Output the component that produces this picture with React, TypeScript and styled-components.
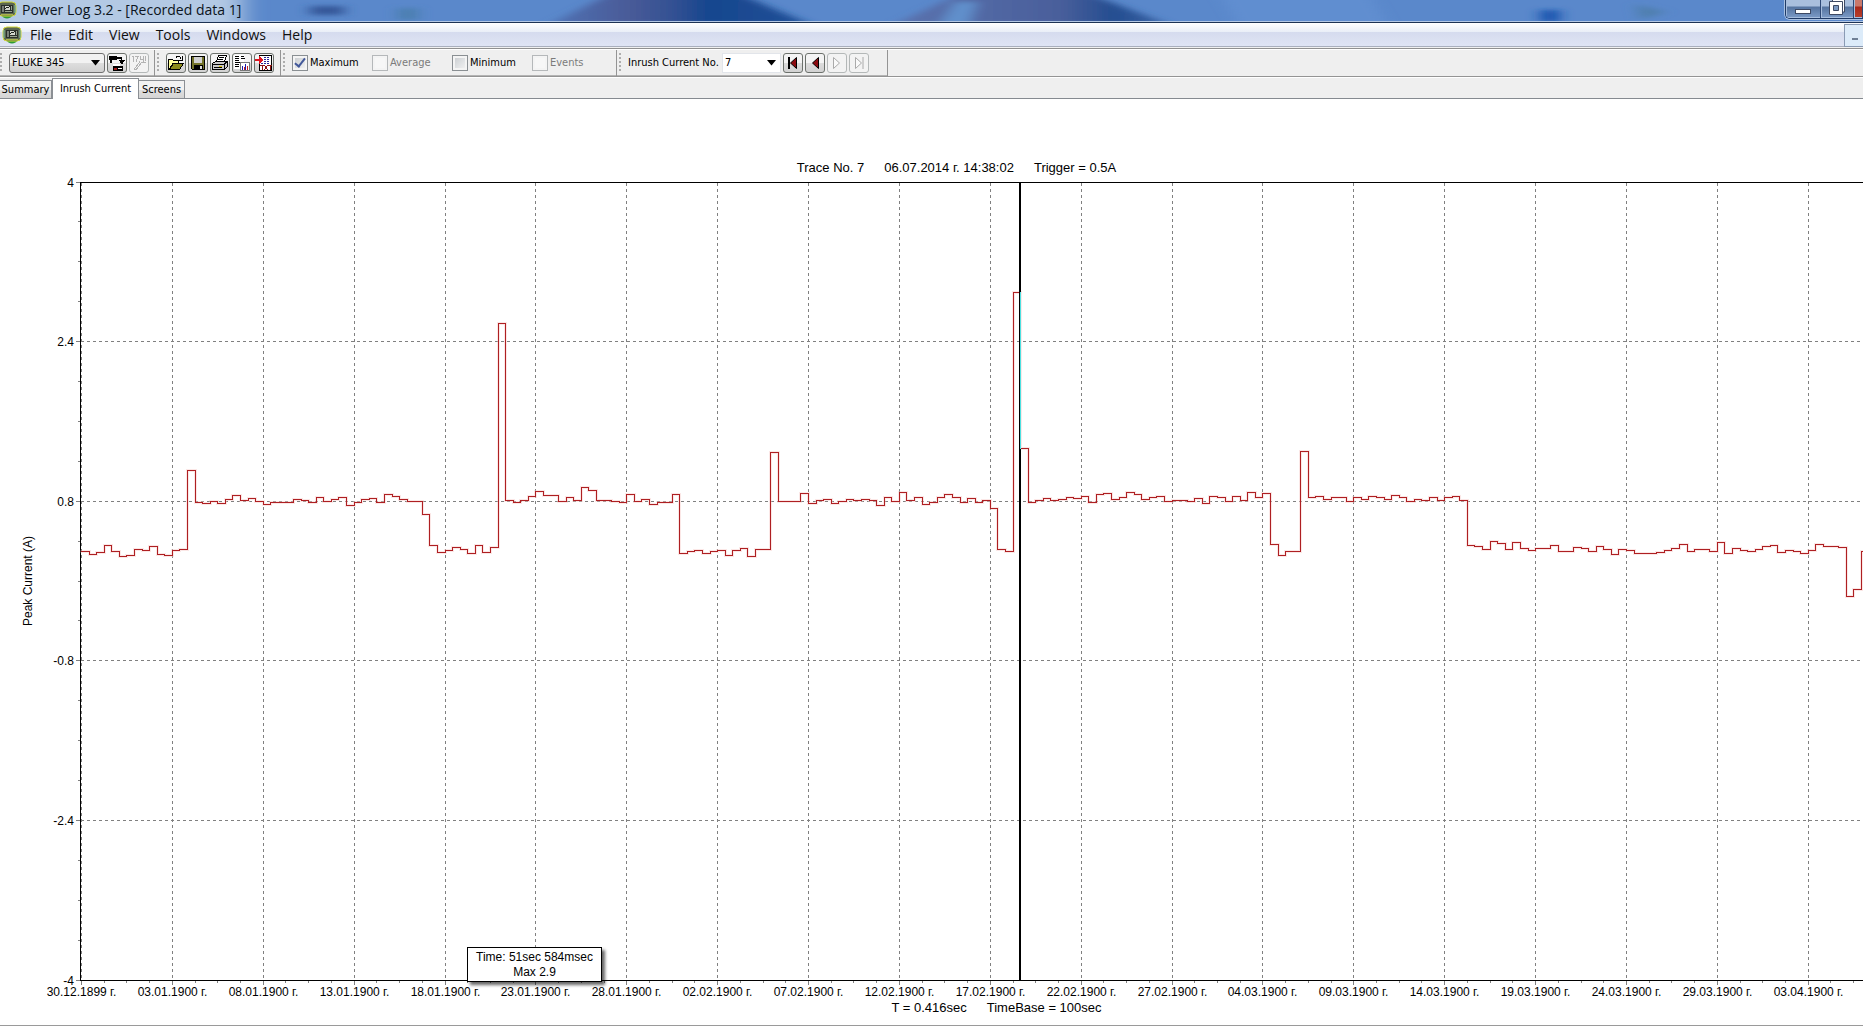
import React from "react";
import styled, { createGlobalStyle } from "styled-components";

const UI = `"Open Sans", "Noto Sans", sans-serif`;
const TOOL = `"DejaVu Sans Condensed", "Noto Sans", sans-serif`;
const ARIAL = `"Liberation Sans", Arial, sans-serif`;

const GlobalStyle = createGlobalStyle`
  *, *::before, *::after { box-sizing: border-box; }
  body { margin: 0; background: #fff; overflow: hidden; }
  button, select, input { font: inherit; color: inherit; margin: 0; }
`;

const Window = styled.div`
  display: flex;
  flex-direction: column;
  min-height: 100vh;
  overflow: hidden;
  color: #000;
`;

/* ---------- title bar ---------- */

const TitleBar = styled.header`
  position: relative;
  display: flex;
  justify-content: space-between;
  height: 23px;
  background: #5a88cb;
  border-bottom: 1px solid #1d3354;
  box-shadow: inset 0 -1px 0 #b4c8e4;
  overflow: hidden;
`;

const Backdrop = styled.svg`
  position: absolute;
  left: 0;
  top: 0;
  width: 100%;
  height: 21px;
`;

const TitleText = styled.h1`
  position: relative;
  display: flex;
  align-items: center;
  gap: 5px;
  margin: 0 0 0 -3px;
  height: 20px;
  font: 400 14px/20px ${UI};
  color: #0b1420;
  white-space: nowrap;
`;

const CaptionButtons = styled.div`
  position: relative;
  display: flex;
  height: 19px;
  border: 1px solid #1f3a66;
  border-top: 0;
  border-right: 0;
  border-radius: 0 0 0 5px;
  box-shadow: 0 0 0 1px #a9c1e2;
  overflow: hidden;
`;

const CaptionButton = styled.button<{ $w: number; $close?: boolean }>`
  display: flex;
  align-items: flex-start;
  justify-content: center;
  width: ${(p) => p.$w}px;
  padding: 0;
  border: 0;
  border-right: 1px solid #2d4875;
  box-shadow: inset 1px -1px 0 #a6bddd;
  background: ${(p) =>
    p.$close
      ? "linear-gradient(#c9796c 0 6px, #a8281a 7px, #b8402c)"
      : "linear-gradient(#a9bfdd 0 6px, #54739f 7px, #7c9bc7)"};
`;

/* ---------- menu ---------- */

const MenuBar = styled.nav`
  display: flex;
  justify-content: space-between;
  height: 26px;
  background: linear-gradient(#fff, #e9eef7 9px, #d5dbee 9px, #dfe4f4 23px, #a9afbd 23px, #a9afbd 24px, #f0f0f0 24px, #f0f0f0 25px, #909090 25px);
`;

const MenuList = styled.div`
  display: flex;
  align-items: center;
  height: 24px;
  padding-left: 2px;
`;

const MenuItem = styled.button`
  padding: 0 8px;
  border: 0;
  background: none;
  font: 400 14px/24px ${UI};
  color: #101010;
`;

const ChildMinimise = styled.button`
  display: flex;
  align-items: flex-end;
  width: 19px;
  height: 23px;
  margin-top: 1px;
  padding: 0 0 6px 7px;
  border: 1px solid #8a9bb4;
  border-right: 0;
  background: #dcebf9;

  &::before {
    content: "";
    width: 6px;
    height: 2px;
    background: #6f8096;
  }
`;

/* ---------- tool bar ---------- */

const ToolBar = styled.div`
  display: flex;
  height: 28px;
  background: #efefef;
  border-top: 1px solid #fff;
  border-bottom: 1px solid #949494;
  font: 400 11px/14px ${TOOL};
`;

const Band = styled.div<{ $start: number; $end: number }>`
  display: flex;
  align-items: center;
  padding: 0 ${(p) => p.$end}px 0 ${(p) => p.$start}px;
  border-right: 1px solid #949494;
  box-shadow: inset 0 -1px 0 #b4b4b4;
`;

const Grip = styled.span`
  width: 2px;
  height: 20px;
  margin-right: 7px;
  background: repeating-linear-gradient(#adadad 0 2px, transparent 2px 4px);
`;

const ButtonRow = styled.div`
  display: flex;
  gap: 2px;
`;

const ToolButton = styled.button`
  display: flex;
  align-items: center;
  justify-content: center;
  width: 20px;
  height: 20px;
  padding: 0;
  border: 1px solid #6c716c;
  border-radius: 3px;
  background: linear-gradient(#f4f4f4 50%, #dcdcdc 50%, #d2d2d2);

  &:disabled {
    border-color: #b4b8b8;
    background: #f3f3f3;
  }
`;

const Picker = styled.span<{ $w: number; $plain?: boolean }>`
  position: relative;
  display: flex;
  width: ${(p) => p.$w}px;
  margin-right: 2px;

  select {
    appearance: none;
    width: 100%;
    height: 20px;
    padding: 0 18px 0 2px;
    border: 1px solid ${(p) => (p.$plain ? "#e2e5ea" : "#707070")};
    border-radius: ${(p) => (p.$plain ? 0 : 3)}px;
    background: ${(p) => (p.$plain ? "#fff" : "linear-gradient(#f2f2f2 50%, #dedede 50%, #d0d0d0)")};
    color: #000;
  }

  svg {
    position: absolute;
    right: 5px;
    top: 7px;
    pointer-events: none;
  }
`;

const CheckGrid = styled.div`
  display: grid;
  grid-template-columns: repeat(4, 80px);
`;

const CheckLabel = styled.label<{ $off?: boolean }>`
  display: flex;
  align-items: center;
  gap: 2px;
  color: ${(p) => (p.$off ? "#7b7b7b" : "#000")};
`;

const CheckBox = styled.input`
  appearance: none;
  position: relative;
  width: 16px;
  height: 16px;
  border: 1px solid #8a8f93;
  background: linear-gradient(135deg, #c6cace, #f6f6f6);
  box-shadow: inset 0 0 0 2px #f4f4f4;

  &:disabled {
    border-color: #b5b8ba;
    background: #f7f7f7;
  }

  &:checked::after {
    content: "";
    position: absolute;
    left: 4px;
    top: 0;
    width: 6px;
    height: 11px;
    border: solid #42589a;
    border-width: 0 2px 2px 0;
    transform: rotate(38deg);
  }
`;

const FieldLabel = styled.label`
  width: 94px;
  white-space: nowrap;
`;

/* ---------- tabs ---------- */

const TabStrip = styled.div`
  display: flex;
  align-items: flex-end;
  height: 22px;
  background: #efefef;
  border-top: 1px solid #fff;
  border-bottom: 1px solid #858a90;
  font: 400 11px/14px ${TOOL};
`;

const Tab = styled.button<{ $active?: boolean; $w: number }>`
  width: ${(p) => p.$w}px;
  height: ${(p) => (p.$active ? 21 : 18)}px;
  margin-bottom: ${(p) => (p.$active ? -1 : 0)}px;
  padding: 0;
  border: 1px solid #8b8f94;
  border-bottom: 0;
  border-left-width: ${(p) => (p.$active ? 1 : 0)}px;
  background: ${(p) => (p.$active ? "#fff" : "linear-gradient(#f2f2f2 50%, #e0e0e0 50%, #d4d4d4)")};
  white-space: nowrap;
`;

/* ---------- chart ---------- */

const ChartPanel = styled.main`
  position: relative;
  flex: 1;
  display: flex;
  flex-direction: column;
  padding-top: 61px;
  border-bottom: 1px solid #9a9a9a;
  background: #fff;
  font: 400 13px/16px ${ARIAL};
`;

const Caption = styled.div<{ $inset: number }>`
  display: flex;
  justify-content: center;
  gap: 20px;
  padding-left: ${(p) => p.$inset}px;
  white-space: nowrap;
`;

const Plot = styled.svg`
  display: block;
  width: 100%;
  height: 824px;
  font: 400 12px ${ARIAL};
`;

const Readout = styled.div`
  position: absolute;
  left: 467px;
  top: 848px;
  width: 135px;
  padding: 2px 0 1px;
  border: 1px solid #000;
  background: #fff;
  box-shadow: 3px 3px 3px rgba(0, 0, 0, 0.6);
  font: 400 12px/15px ${ARIAL};
  text-align: center;
`;

const TOP = 6;
const BOTTOM = 804;
const ZERO_EIGHT = 325;
const LEFT = 81.5;
const STEP = 90.88 / 12;

// Offset of each sample from the 0.8 A grid line, downwards; twelve samples per date division.
const SAMPLES = [
  50, 53, 51, 44, 50, 55, 54, 48, 49, 45, 53, 54,
  49, 48, -31, 1, 2, 0, 2, -2, -6, -1, -3, 0,
  3, 1, 1, 1, -2, -1, 1, -4, 0, -2, -4, 4,
  1, -2, -3, 1, -7, -5, -2, 0, 0, 13, 44, 51,
  49, 46, 48, 52, 44, 51, 46, -178, -1, 1, -1, -5,
  -10, -6, -6, 0, -4, -1, -14, -11, -1, -1, 0, 1,
  -7, 0, -2, 3, 1, 1, -7, 52, 50, 49, 52, 50,
  49, 54, 49, 47, 55, 48, 48, -49, 0, 0, 0, -8,
  2, -1, -2, 2, 0, -2, -1, -2, -1, 4, -4, 0,
  -9, -1, -4, 3, 1, -4, -7, -4, 1, -3, 1, -1,
  7, 48, 50, -209, -53, 1, -1, -3, -1, -2, -4, -3,
  -5, 1, -7, -8, -2, -4, -9, -7, -2, -4, -5, 0,
  -1, -1, 0, -3, 2, -5, -4, 0, -5, -1, -9, -4,
  -8, 43, 54, 50, 50, -50, -4, -5, -2, -4, -4, 0,
  -4, -2, -5, -4, -2, -6, -4, 0, -2, -1, -4, -1,
  -4, -5, -1, 44, 45, 48, 40, 42, 48, 41, 47, 49,
  47, 47, 44, 50, 50, 46, 47, 50, 45, 48, 53, 48,
  49, 52, 52, 52, 51, 49, 47, 43, 50, 48, 48, 50,
  41, 52, 47, 49, 50, 48, 45, 44, 51, 49, 50, 52,
  49, 43, 45, 45, 46, 95, 88, 50,
];

const DATES = [
  "30.12.1899", "03.01.1900", "08.01.1900", "13.01.1900", "18.01.1900",
  "23.01.1900", "28.01.1900", "02.02.1900", "07.02.1900", "12.02.1900",
  "17.02.1900", "22.02.1900", "27.02.1900", "04.03.1900", "09.03.1900",
  "14.03.1900", "19.03.1900", "24.03.1900", "29.03.1900", "03.04.1900",
];

const LEVELS = ["4", "2.4", "0.8", "-0.8", "-2.4", "-4"];

const sampleX = (i: number) => Math.floor(LEFT + i * STEP) + 0.5;
const levelY = (k: number) => Math.floor(TOP + (k * (BOTTOM - TOP)) / 5) + 0.5;

const tracePath = SAMPLES.map((d, i) => {
  const y = ZERO_EIGHT + d + 0.5;
  return `${i ? "V" : "M80.5 "}${y}H${sampleX(i + 1)}`;
}).join("");

function Chart() {
  return (
    <Plot role="img" aria-label="Peak current trace">
      <g stroke="#808080" strokeDasharray="3 3" shapeRendering="crispEdges">
        {DATES.map((d, i) => (
          <line key={d} x1={sampleX(i * 12)} x2={sampleX(i * 12)} y1={TOP + 1} y2={BOTTOM} />
        ))}
        {LEVELS.slice(1, 5).map((l, i) => (
          <line key={l} x1="81" x2="100%" y1={levelY(i + 1)} y2={levelY(i + 1)} />
        ))}
      </g>
      <g stroke="#808080" shapeRendering="crispEdges">
        {Array.from({ length: 21 }, (_, i) => (
          <line key={i} x1={i % 4 ? 78 : 76} x2="80" y1={levelY(i / 4)} y2={levelY(i / 4)} />
        ))}
        {Array.from({ length: 79 }, (_, i) => (
          <line key={i} x1={sampleX(i * 3)} x2={sampleX(i * 3)} y1={BOTTOM + 1} y2={BOTTOM + (i % 4 ? 3 : 5)} />
        ))}
      </g>
      <g stroke="#000" shapeRendering="crispEdges">
        <line x1="80" x2="100%" y1={TOP + 0.5} y2={TOP + 0.5} />
        <line x1="80" x2="100%" y1={BOTTOM + 0.5} y2={BOTTOM + 0.5} />
        <line x1="80.5" x2="80.5" y1={TOP} y2={BOTTOM} />
      </g>
      <path d={tracePath} fill="none" stroke="#f6c4c0" strokeWidth="3" opacity="0.4" />
      <path d={tracePath} fill="none" stroke="#ae1f22" shapeRendering="crispEdges" />
      <rect x="1019" y={TOP} width="2" height={BOTTOM - TOP} />
      <rect x="1020" y="116" width="1" height="157" fill="#4fe0e0" />
      {LEVELS.map((l, i) => (
        <text key={l} x="74" y={levelY(i) + 4} textAnchor="end">{l}</text>
      ))}
      {DATES.map((d, i) => (
        <text key={d} x={sampleX(i * 12)} y="820" textAnchor="middle">{d} г.</text>
      ))}
      <text transform="translate(32 405) rotate(-90)" textAnchor="middle">Peak Current (A)</text>
    </Plot>
  );
}

/* ---------- drawings ---------- */

const AppIcon = () => (
  <svg width="20" height="20" viewBox="0 0 20 20" aria-hidden="true">
    <path d="M3 14q7 9 14 0z" fill="#2f9a35" />
    <rect x="1" y="2" width="18" height="14" rx="4" fill="#5b6650" stroke="#d3d838" />
    <path d="M2 5v8M18 5v8" stroke="#7fc0a8" />
    <rect x="4" y="5" width="12" height="8" fill="#2a302c" />
    <path d="M5 7h2M5 9h2M5 11h2" stroke="#c9cfc4" />
    <rect x="8" y="6" width="5" height="4" fill="#d4d8d0" />
    <path d="M8 9l2-2 1 1 2-2" stroke="#20261e" fill="none" />
    <path d="M8 11.500h7M14.500 6v4" stroke="#97a28f" />
    <path d="M4 14.500h12" stroke="#a9b24a" />
  </svg>
);

const Arrow = () => (
  <svg width="9" height="6" viewBox="0 0 9 6" aria-hidden="true"><path d="M0 0h9L4.500 5.500z" /></svg>
);

const Glyph = ({ children }: { children: React.ReactNode }) => (
  <svg width="18" height="18" viewBox="0 0 18 18" shapeRendering="crispEdges" aria-hidden="true">{children}</svg>
);

const TransferIcon = () => (
  <Glyph>
    <path d="M1 2h8v4H1zM2 6h2v3H2z" />
    <path d="M9 3h5v4h-1V5H9zM11 6h6l-3 5z" />
    <path d="M5 10h7v2H5z" fill="#fff" />
    <path d="M5 12h10v5H5z" /><path d="M6 14h3v2H6z" fill="#a01a1a" /><path d="M10 14h4v1h-4z" fill="#fff" />
  </Glyph>
);

const SetupIcon = () => (
  <Glyph>
    <g fill="none" stroke="#b3b3b3">
      <path d="M2 2.500h1V8M5 2.500h3L6 8M10.500 2v3h3M13.500 2v6M15.500 2v5M10 7.500l-6 8M12 8l-6 8M4 15.500h2M12 8h4" />
    </g>
  </Glyph>
);

const OpenIcon = () => (
  <Glyph>
    <path d="M1.500 5.500h4l1 1h5v3H6l-4 6z" fill="#ffff9a" stroke="#000" />
    <path d="M2.500 15.500l4-6h10l-4 6z" fill="#8a8a1a" stroke="#000" />
    <path d="M9 3.500q3-3 5 1M15 2v4h-4" fill="none" stroke="#000" />
  </Glyph>
);

const SaveIcon = () => (
  <Glyph>
    <path d="M2.500 2.500h13v13h-12l-1-1z" fill="#74742a" stroke="#000" />
    <rect x="5" y="3" width="8" height="6" fill="#d0d0d0" />
    <rect x="5" y="11" width="9" height="5" fill="#000" />
    <rect x="11" y="12" width="2" height="3" fill="#e0e0e0" />
  </Glyph>
);

const PrintIcon = () => (
  <Glyph>
    <path d="M5.500 7.500l2-6h8l-2 6z" fill="#fff" stroke="#000" />
    <path d="M8 3.500h5M7 5.500h5" stroke="#000" />
    <path d="M1.500 9.500l3-2h12v5l-3 3h-12z" fill="#c8c8c8" stroke="#000" />
    <path d="M2 10.500h11l3-3M13.500 10v5M3 13.500h8" fill="none" stroke="#000" />
    <path d="M8 12h3v1H8z" fill="#d8c400" />
  </Glyph>
);

const ReportIcon = () => (
  <Glyph>
    <path d="M1 1h10v14H1z" fill="#fff" />
    <path d="M2 2.500h4M8 2.500h3M2 4.500h4M8 4.500h4M2 6.500h4M2 8.500h5M2 10.500h4M2 12.500h4" stroke="#000" />
    <path d="M7.500 8.500h9v8h-9z" fill="#fff" stroke="#777" />
    <path d="M9.500 12v4M12.500 10v6" stroke="#1c1cb0" />
    <path d="M11.500 13v3M14.500 12v4" stroke="#c81e1e" />
  </Glyph>
);

const ExportIcon = () => (
  <Glyph>
    <path d="M4.500 1.500h12v15h-12z" fill="#fff" stroke="#000" />
    <path d="M9 3.500h6M9 5.500h6M9 7.500h6M6 9.500h9" stroke="#2a2a9a" strokeDasharray="2 1" />
    <path d="M0 5h4V2l4 4-4 4V7H0z" fill="#e01420" />
    <path d="M5 11.500h4M7 11v5M9.500 11l3 5M12.500 11l-3 5M13 11.500h4M15 11v5" stroke="#8c1414" fill="none" />
  </Glyph>
);

const NavIcon = ({ back, bar, off }: { back?: boolean; bar?: boolean; off?: boolean }) => (
  <svg width="18" height="18" viewBox="0 0 18 18" aria-hidden="true">
    <g
      transform={back ? undefined : "translate(18 0) scale(-1 1)"}
      fill={off ? "#fafafa" : "#8c0a10"}
      stroke={off ? "#aaa" : "#000"}
    >
      {bar && <path d="M5 3v12" strokeWidth={off ? 1 : 2} />}
      <path d="M12.500 3.500v11L6.500 9z" />
    </g>
  </svg>
);

const Desktop = () => (
  <Backdrop aria-hidden="true">
    <defs>
      <filter id="soft" x="-10%" y="-100%" width="120%" height="300%"><feGaussianBlur stdDeviation="7 2" /></filter>
      <filter id="haze" x="-30%" y="-100%" width="160%" height="300%"><feGaussianBlur stdDeviation="12 3" /></filter>
      <linearGradient id="ridge"><stop offset="0" stopColor="#4f72b4" /><stop offset=".3" stopColor="#4a5b98" /><stop offset=".5" stopColor="#2f4f92" /><stop offset=".6" stopColor="#17468e" /><stop offset="1" stopColor="#1f5097" /></linearGradient>
      <linearGradient id="ridge2"><stop offset="0" stopColor="#5a72ae" /><stop offset=".6" stopColor="#4a5f9b" /><stop offset=".8" stopColor="#244d90" /><stop offset="1" stopColor="#3a64a5" /></linearGradient>
    </defs>
    <g filter="url(#soft)">
      <path d="M550 24L610-6H740L810 24z" fill="url(#ridge)" />
      <path d="M895 24L960-6H1090L1168 24z" fill="url(#ridge2)" />
      <path d="M940 24l15-22h22l-8 22z" fill="#6090cc" />
      <path d="M310 6h34v9h-34z" fill="#36599a" />
      <path d="M398 8h20v12h-20z" fill="#4b7fb0" />
      <path d="M1540 10h20v12h-20z" fill="#1d56b0" />
      <path d="M1636 4l30 8-26 8z" fill="#4f7fae" />
      <path d="M1220-5h150l18 30h-150z" fill="#608ed0" />
    </g>
    <g filter="url(#haze)">
      <path d="M-30-8h272v38H-30z" fill="#b3c9e4" />
    </g>
  </Backdrop>
);

export default function App() {
  return (
    <Window>
      <GlobalStyle />
      <TitleBar>
        <Desktop />
        <TitleText><AppIcon />Power Log 3.2 - [Recorded data 1]</TitleText>
        <CaptionButtons>
          <CaptionButton $w={35} aria-label="Minimize">
            <svg width="18" height="18" viewBox="0 0 18 18"><rect x="1.500" y="9.500" width="15" height="4" fill="#fff" stroke="#3d4963" /></svg>
          </CaptionButton>
          <CaptionButton $w={33} aria-label="Restore">
            <svg width="18" height="18" viewBox="0 0 18 18">
              <path d="M4.500-1h12v13h-12z" fill="#fff" stroke="#3d4963" />
              <path d="M1.500 1.500h13v13h-13z" fill="#fff" stroke="#3d4963" />
              <path d="M5.500 5.500h5v5h-5z" fill="#7d9ac2" stroke="#3d4963" />
            </svg>
          </CaptionButton>
          <CaptionButton $w={9} $close aria-label="Close" />
        </CaptionButtons>
      </TitleBar>

      <MenuBar>
        <MenuList>
          <AppIcon />
          {["File", "Edit", "View", "Tools", "Windows", "Help"].map((m) => (
            <MenuItem key={m}>{m}</MenuItem>
          ))}
        </MenuList>
        <ChildMinimise aria-label="Minimize child window" />
      </MenuBar>

      <ToolBar>
        <Band $start={0} $end={5}>
          <Grip />
          <Picker $w={96}>
            <select aria-label="Instrument"><option>FLUKE 345</option></select>
            <Arrow />
          </Picker>
          <ButtonRow>
            <ToolButton aria-label="Transfer"><TransferIcon /></ToolButton>
            <ToolButton aria-label="Setup" disabled><SetupIcon /></ToolButton>
          </ButtonRow>
        </Band>
        <Band $start={2} $end={6}>
          <Grip />
          <ButtonRow>
            <ToolButton aria-label="Open"><OpenIcon /></ToolButton>
            <ToolButton aria-label="Save"><SaveIcon /></ToolButton>
            <ToolButton aria-label="Print"><PrintIcon /></ToolButton>
            <ToolButton aria-label="Report"><ReportIcon /></ToolButton>
            <ToolButton aria-label="Export text"><ExportIcon /></ToolButton>
          </ButtonRow>
        </Band>
        <Band $start={2} $end={4}>
          <Grip />
          <CheckGrid>
            <CheckLabel><CheckBox type="checkbox" defaultChecked />Maximum</CheckLabel>
            <CheckLabel $off><CheckBox type="checkbox" disabled />Average</CheckLabel>
            <CheckLabel><CheckBox type="checkbox" />Minimum</CheckLabel>
            <CheckLabel $off><CheckBox type="checkbox" disabled />Events</CheckLabel>
          </CheckGrid>
        </Band>
        <Band $start={2} $end={18}>
          <Grip />
          <FieldLabel htmlFor="inrush">Inrush Current No.</FieldLabel>
          <Picker $w={59} $plain>
            <select id="inrush"><option>7</option></select>
            <Arrow />
          </Picker>
          <ButtonRow>
            <ToolButton aria-label="First"><NavIcon back bar /></ToolButton>
            <ToolButton aria-label="Previous"><NavIcon back /></ToolButton>
            <ToolButton aria-label="Next" disabled><NavIcon off /></ToolButton>
            <ToolButton aria-label="Last" disabled><NavIcon bar off /></ToolButton>
          </ButtonRow>
        </Band>
      </ToolBar>

      <TabStrip role="tablist">
        <Tab role="tab" $w={52}>Summary</Tab>
        <Tab role="tab" $w={87} $active aria-selected>Inrush Current</Tab>
        <Tab role="tab" $w={46}>Screens</Tab>
      </TabStrip>

      <ChartPanel>
        <Caption $inset={50}>
          <span>Trace No. 7</span>
          <span>06.07.2014 г. 14:38:02</span>
          <span>Trigger = 0.5A</span>
        </Caption>
        <Chart />
        <Caption $inset={130}>
          <span>T = 0.416sec</span>
          <span>TimeBase = 100sec</span>
        </Caption>
        <Readout>
          <div>Time: 51sec 584msec</div>
          <div>Max 2.9</div>
        </Readout>
      </ChartPanel>
    </Window>
  );
}
